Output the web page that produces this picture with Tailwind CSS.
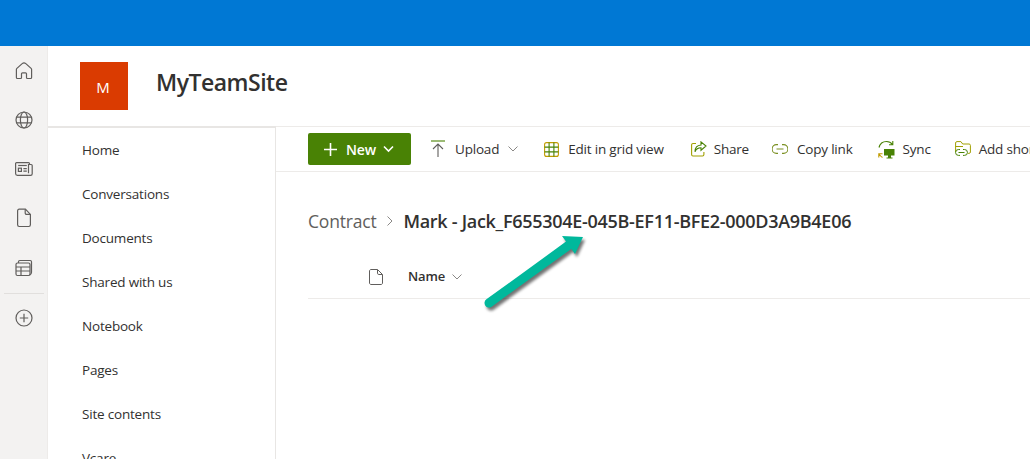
<!DOCTYPE html>
<html lang="en">
<head>
  <meta charset="UTF-8" />
  <title>MyTeamSite</title>
  <script src="https://cdn.jsdelivr.net/npm/@tailwindcss/browser@4"></script>
</head>
<body class="relative h-[459px] w-[1030px] overflow-hidden bg-white font-['Open_Sans',sans-serif] text-[#323130]">
  <div class="h-[46px] bg-[#0078d4]"></div>
  <div class="flex h-[413px]">
    <!-- app rail -->
    <div class="flex w-[48px] shrink-0 flex-col items-center border-r border-[#edebe9] bg-[#f3f2f1] text-[#605e5c]">
      <div class="flex h-[50px] w-full items-center justify-center">
        <svg class="h-[20px] w-[20px]" viewBox="0 0 20 20" fill="none" stroke="currentColor" stroke-width="1.2"><path d="M8.2 2.600 2.900 7.400c-.3.3-.5.7-.5 1.100v8c0 .6.4 1 1 1h3.200c.5 0 .9-.4.9-1v-3.700c0-.6.4-1 1-1h3c.6 0 1 .4 1 1v3.700c0 .6.4 1 .9 1h3.200c.6 0 1-.4 1-1v-8c0-.4-.2-.8-.5-1.100l-5.300-4.800c-1-.9-2.600-.9-3.600 0Z"/></svg>
      </div>
      <div class="flex h-[48px] w-full items-center justify-center">
        <svg class="h-[18px] w-[18px]" viewBox="0 0 18 18" fill="none" stroke="currentColor" stroke-width="1.2"><circle cx="9" cy="9" r="8"/><ellipse cx="9" cy="9" rx="3.600" ry="8"/><path d="M1.600 6.200h14.800M1.600 11.800h14.800"/></svg>
      </div>
      <div class="flex h-[50px] w-full items-center justify-center">
        <svg class="h-[18px] w-[18px]" viewBox="0 0 18 18" fill="none" stroke="currentColor" stroke-width="1.2"><path d="M14.500 4.500V3.600c0-.6-.4-1-1-1H1.600c-.6 0-1 .4-1 1v10c0 1 .8 1.800 1.800 1.800h13.200c.9 0 1.600-.7 1.600-1.600V5.500c0-.6-.4-1-1-1h-2.700v8.800"/><path d="M3.200 5.500h8.600"/><rect x="3.400" y="8.200" width="3" height="3.200"/><path d="M8.400 8.600h3.400M8.400 11.200h3.400"/></svg>
      </div>
      <div class="flex h-[48px] w-full items-center justify-center">
        <svg class="h-[20px] w-[20px]" viewBox="0 0 20 20" fill="none" stroke="currentColor" stroke-width="1.2"><path d="M5.200 1.200h6.200l5 5.200v10.400c0 1-.7 1.700-1.600 1.700H5.200c-.9 0-1.600-.7-1.600-1.700V2.900c0-1 .7-1.700 1.600-1.700Z"/><path d="M11.200 1.400v3.700c0 .8.6 1.300 1.300 1.300h3.700"/></svg>
      </div>
      <div class="flex h-[52px] w-full items-center justify-center">
        <svg class="h-[18px] w-[18px]" viewBox="0 0 18 18" fill="none" stroke="currentColor" stroke-width="1.2"><path d="M3.500 4V2.800c0-.8.6-1.300 1.300-1.300h10.400c.8 0 1.300.6 1.300 1.300v10.400c0 1.400-.8 2.500-2 3"/><rect x="1" y="4" width="14" height="12.500" rx="1.500"/><path d="M1 8h14M1 12h14M6 8v8.500"/></svg>
      </div>
      <div class="mt-[-1px] h-px w-[40px] bg-[#e1dfdd]"></div>
      <div class="flex h-[48px] w-full items-center justify-center">
        <svg class="h-[18px] w-[18px]" viewBox="0 0 18 18" fill="none" stroke="currentColor" stroke-width="1.2"><circle cx="9" cy="9" r="8"/><path d="M9 4.800v8.400M4.800 9h8.400"/></svg>
      </div>
    </div>

    <div class="flex min-w-0 flex-1 flex-col">
      <!-- site header -->
      <div class="flex h-[80px] shrink-0 items-start pl-[32px] pt-[16px]">
        <div class="flex h-[48px] w-[48px] items-center justify-center bg-[#da3b01] pr-[2px] pt-[2px] text-[15px] text-white">M</div>
        <div class="ml-[28px] text-[23px] font-semibold leading-[40px] tracking-[-0.5px]">MyTeamSite</div>
      </div>

      <div class="flex min-h-0 flex-1">
        <!-- site nav -->
        <nav class="w-[228px] shrink-0 border-r border-t-2 border-[#e8e6e4] pl-[34px] text-[13.5px] tracking-[-0.2px]">
          <div class="flex h-[44px] items-center">Home</div>
          <div class="flex h-[44px] items-center">Conversations</div>
          <div class="flex h-[44px] items-center">Documents</div>
          <div class="flex h-[44px] items-center">Shared with us</div>
          <div class="flex h-[44px] items-center">Notebook</div>
          <div class="flex h-[44px] items-center">Pages</div>
          <div class="flex h-[44px] items-center">Site contents</div>
          <div class="flex h-[44px] items-center">Vcare</div>
        </nav>

        <main class="min-w-0 flex-1 overflow-hidden border-t border-[#edebe9]">
          <!-- command bar -->
          <div class="flex h-[45px] items-center whitespace-nowrap border-b border-[#edebe9] pl-[32px] text-[13.5px] tracking-[-0.2px]">
            <div class="flex h-[32px] w-[103px] shrink-0 items-center rounded-[2px] bg-[#498205] pl-[16px] text-[14px] font-semibold tracking-[-0.15px] text-white">
              <svg class="h-[13px] w-[13px]" viewBox="0 0 13 13" stroke="currentColor" stroke-width="1.6"><path d="M6.500 0v13M0 6.500h13"/></svg>
              <span class="ml-[9px]">New</span>
              <svg class="ml-[7px] h-[8px] w-[11px]" viewBox="0 0 11 8" fill="none" stroke="currentColor" stroke-width="1.6"><path d="m1 1.500 4.500 4.500L10 1.500"/></svg>
            </div>
            <svg class="ml-[20px] h-[18px] w-[14px] shrink-0" viewBox="0 0 14 18" fill="none" stroke-width="1.1"><path d="M0 1h14" stroke="#498205"/><path d="M7 17V4M2 9l5-5 5 5" stroke="#605e5c"/></svg>
            <span class="ml-[10px]">Upload</span>
            <svg class="ml-[9px] h-[6px] w-[10px] shrink-0" viewBox="0 0 10 6" fill="none" stroke="#8a8886"><path d="m.5.5 4.500 4.500L9.500.5"/></svg>
            <svg class="ml-[26px] h-[15px] w-[15px] shrink-0" viewBox="0 0 15 15" fill="none" stroke="#498205" stroke-width="1.1"><rect x=".6" y=".6" width="13.800" height="13.800" rx="2" stroke="#c19c00"/><path d="M.6 5.100h13.800M.6 9.900h13.800M5.100.6v13.800M9.900.6v13.800"/></svg>
            <span class="ml-[9px]">Edit in grid view</span>
            <svg class="ml-[27px] h-[16px] w-[16px] shrink-0" viewBox="0 0 16 16" fill="none" stroke-width="1.1"><path d="M5 2.500H2c-.8 0-1.400.6-1.400 1.400v9.700c0 .8.6 1.400 1.400 1.400h9.500c.8 0 1.400-.6 1.400-1.400V11" stroke="#a19f00"/><path d="m10 .8 5 4.200-5 4.200V6.800c-3.500 0-5 1.500-6 4 0-4 2-6.500 6-6.800Z" stroke="#498205"/></svg>
            <span class="ml-[7px]">Share</span>
            <svg class="ml-[23px] h-[10px] w-[16px] shrink-0" viewBox="0 0 16 10" fill="none" stroke="#7a8f20" stroke-width="1.1"><path d="M6 .6H4.500a4 4 0 0 0 0 8.800H6M10 .6h1.500a4 4 0 0 1 0 8.800H10M4.500 5h7"/></svg>
            <span class="ml-[9px]">Copy link</span>
            <svg class="ml-[25px] h-[19px] w-[17px] shrink-0" viewBox="0 0 17 19" fill="none" stroke-width="1.1"><path d="M1 7.500C2 3.500 5 1.500 8.500 1.500c2.500 0 4.500 1 6 3M14.800 1v3.800H11" stroke="#498205"/><path d="M.8 17.500V13.800h3.700M.8 13.800c1 1.600 2.200 2.900 3.700 3.700" stroke="#c19c00"/><path d="M6 9h10.500v6.500H13v2h1.500v1h-6v-1H10v-2H6Z" fill="#498205"/></svg>
            <span class="ml-[8px]">Sync</span>
            <svg class="ml-[24px] h-[16px] w-[16px] shrink-0" viewBox="0 0 16 16" fill="none" stroke-width="1"><path d="M.6 11V2c0-.8.5-1.400 1.300-1.400h4l1.800 2.400h6.400c.8 0 1.300.6 1.300 1.400V11c0 .8-.5 1.400-1.300 1.400h-1" stroke="#a19f00"/><path d="M.6 5.500H8" stroke="#a19f00"/><path d="M5 8.500H3.500a2.900 2.900 0 0 0 0 5.900H5M8 8.500h1.500a2.900 2.900 0 0 1 0 5.900H8M3.500 11.500h6" stroke="#498205"/></svg>
            <span class="ml-[8px]">Add shortcut to OneDrive</span>
          </div>

          <!-- breadcrumb -->
          <div class="flex h-[61px] items-end whitespace-nowrap pl-[32px]">
            <span class="text-[17.5px] leading-[24px] tracking-[-0.2px] text-[#605e5c]">Contract</span>
            <svg class="ml-[11px] mr-[10px] mb-[7px] h-[10px] w-[6px] shrink-0" viewBox="0 0 6 10" fill="none" stroke="#8a8886"><path d="m.5.5 4.500 4.500-4.500 4.500"/></svg>
            <span class="text-[18px] font-semibold leading-[24px] tracking-[-0.29px]">Mark - Jack_F655304E-045B-EF11-BFE2-000D3A9B4E06</span>
          </div>

          <!-- list header -->
          <div class="ml-[32px] mt-[22px] flex h-[44px] items-center border-b border-[#edebe9] pt-[1px] text-[13px] font-semibold tracking-[-0.1px]">
            <svg class="ml-[61px] h-[16px] w-[14px] shrink-0" viewBox="0 0 14 16" fill="none" stroke="#605e5c" stroke-width="1"><path d="M2 .5h6.500L13.500 5.500v8.500c0 .8-.6 1.500-1.400 1.500H2c-.8 0-1.500-.7-1.500-1.500V2C.5 1.200 1.200.5 2 .5Z"/><path d="M8.500.7v3.500c0 .8.5 1.300 1.300 1.300h3.500"/></svg>
            <span class="ml-[25px]">Name</span>
            <svg class="ml-[7px] h-[6px] w-[10px] shrink-0" viewBox="0 0 10 6" fill="none" stroke="#8a8886"><path d="m.5.5 4.500 4.500L9.500.5"/></svg>
          </div>
        </main>
      </div>
    </div>
  </div>

  <!-- annotation arrow drawn over the screenshot -->
  <svg class="absolute left-[476px] top-[228px] h-[90px] w-[120px]" viewBox="0 0 120 90" fill="none">
    <g transform="translate(2 3)" opacity=".55" class="blur-[1.5px]">
      <path d="M13 75 93 17" stroke="#000" stroke-width="9" stroke-linecap="round"/>
      <path d="M86 8 107 9 99 26Z" fill="#000"/>
    </g>
    <path d="M13 75 93 17" stroke="#00b89c" stroke-width="9" stroke-linecap="round"/>
    <path d="M86 8 107 9 99 26Z" fill="#00b89c"/>
  </svg>
</body>
</html>
